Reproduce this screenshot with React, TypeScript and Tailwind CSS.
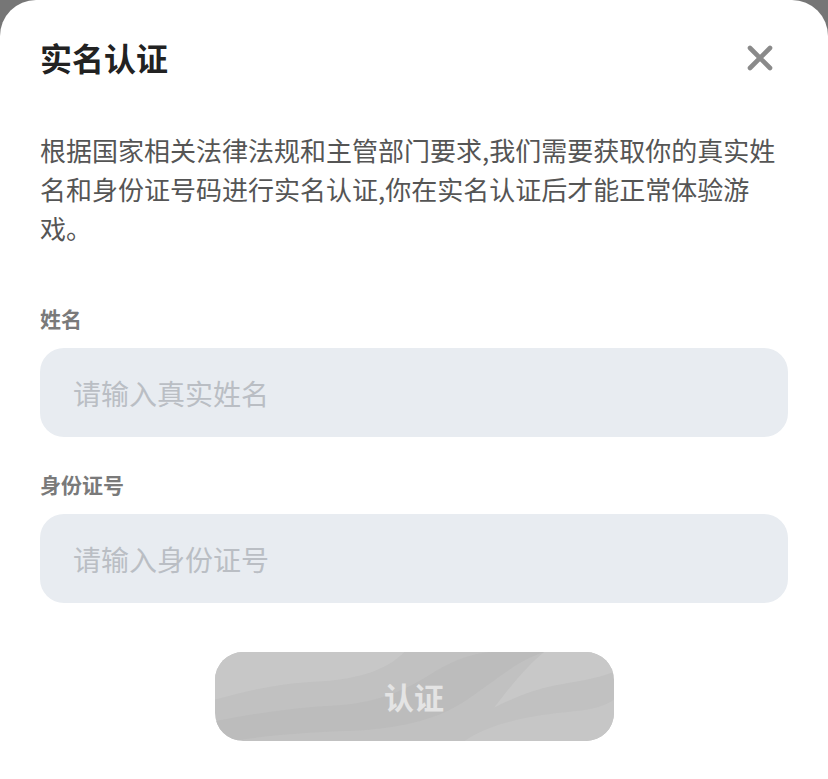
import { useState } from "react";

const font = { fontFamily: '"Noto Sans CJK SC", "Noto Sans", sans-serif' };

function CloseIcon() {
  return (
    <svg width="26" height="26" viewBox="0 0 26 26" fill="none">
      <path d="M3 3L23 23M23 3L3 23" stroke="#8a8a8a" strokeWidth="4.6" strokeLinecap="round" />
    </svg>
  );
}

function WaveBackdrop() {
  return (
    <svg
      className="absolute inset-0 h-full w-full"
      viewBox="0 0 400 90"
      preserveAspectRatio="none"
    >
      <rect width="400" height="90" fill="#c1c1c1" />
      <path d="M0 0H190C170 20 140 28 100 30C60 32 30 40 0 48Z" fill="#c7c7c7" />
      <path d="M0 70C40 62 80 56 120 54C160 52 190 40 220 20C240 8 260 0 280 0H330C300 10 280 30 250 50C220 70 180 78 130 80C80 82 40 86 20 90H0Z" fill="#bcbcbc" />
      <path d="M250 90C280 70 320 64 360 60C380 58 392 54 400 48V90Z" fill="#c6c6c6" />
      <path d="M330 0H400V20C380 28 360 30 340 34C320 38 300 46 280 56C300 30 315 12 330 0Z" fill="#c8c8c8" />
    </svg>
  );
}

export default function App() {
  const [name, setName] = useState("");
  const [idNumber, setIdNumber] = useState("");

  return (
    <div className="min-h-[779px] bg-[#767676]" style={font}>
      <div className="flex min-h-[779px] flex-col rounded-t-[36px] bg-white px-[40px]">
        <div className="flex items-center justify-between pt-[37px]">
          <h1 className="text-[32px] font-bold leading-[40px] text-[#222222]">实名认证</h1>
          <button type="button" className="mr-[15px] mt-[2px] flex items-center">
            <CloseIcon />
          </button>
        </div>

        <p className="mt-[53px] text-[26px] leading-[39px] text-[#555555]">
          根据国家相关法律法规和主管部门要求,我们需要获取你的真实姓名和身份证号码进行实名认证,你在实名认证后才能正常体验游戏。
        </p>

        <label className="mt-[57px] block text-[21px] font-bold leading-[28px] text-[#7a7a7a]">姓名</label>
        <input
          value={name}
          onChange={(event) => setName(event.target.value)}
          placeholder="请输入真实姓名"
          className="mt-[16px] h-[89px] w-full rounded-[24px] bg-[#e8ecf1] px-[33px] text-[28px] text-[#333333] outline-none placeholder:text-[#babec4]"
        />

        <label className="mt-[33px] block text-[21px] font-bold leading-[28px] text-[#7a7a7a]">身份证号</label>
        <input
          value={idNumber}
          onChange={(event) => setIdNumber(event.target.value)}
          placeholder="请输入身份证号"
          className="mt-[16px] h-[89px] w-full rounded-[24px] bg-[#e8ecf1] px-[33px] text-[28px] text-[#333333] outline-none placeholder:text-[#babec4]"
        />

        <div className="mt-[49px] flex justify-center">
          <button
            type="button"
            disabled
            className="relative h-[89px] w-[399px] overflow-hidden rounded-[28px]"
          >
            <WaveBackdrop />
            <span className="relative text-[30px] font-bold text-[#e4e4e4]">认证</span>
          </button>
        </div>
      </div>
    </div>
  );
}
